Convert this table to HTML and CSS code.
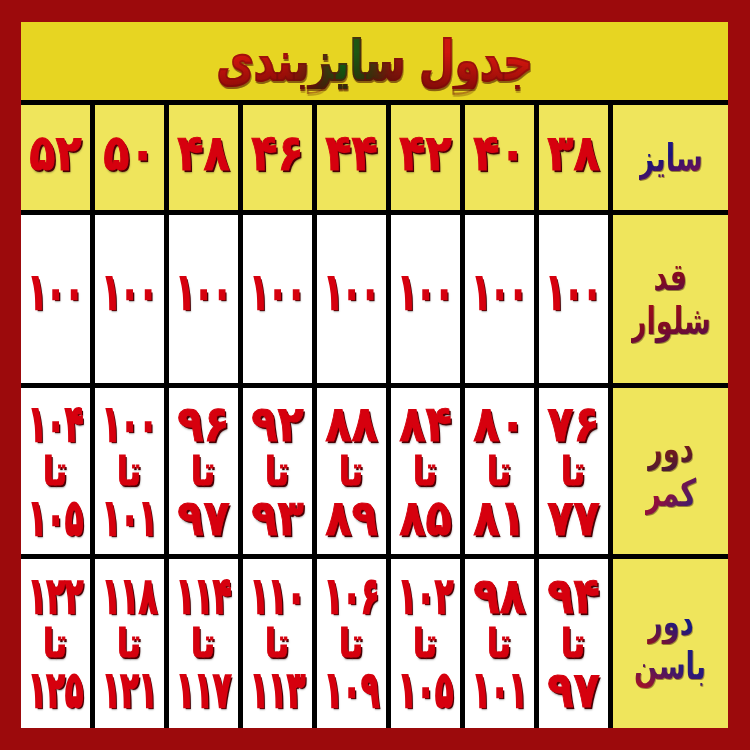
FILE: index.html
```html
<!DOCTYPE html>
<html lang="fa">
<head>
<meta charset="utf-8">
<link rel="stylesheet" href="styles.css">
</head>
<body>
<div class="frame">
  <div class="title"><h1 class="title-text">جدول سایزبندی</h1></div>
  <div class="table" dir="rtl">
    <div class="cell label"><span class="lbl lbl-size">سایز</span></div>
    <div class="cell head"><span class="num">۳۸</span></div>
    <div class="cell head"><span class="num">۴۰</span></div>
    <div class="cell head"><span class="num">۴۲</span></div>
    <div class="cell head"><span class="num">۴۴</span></div>
    <div class="cell head"><span class="num">۴۶</span></div>
    <div class="cell head"><span class="num">۴۸</span></div>
    <div class="cell head"><span class="num">۵۰</span></div>
    <div class="cell head"><span class="num">۵۲</span></div>

    <div class="cell label"><span class="lbl lbl-red">قد</span><span class="lbl lbl-red">شلوار</span></div>
    <div class="cell val single"><span class="num n3">۱۰۰</span></div>
    <div class="cell val single"><span class="num n3">۱۰۰</span></div>
    <div class="cell val single"><span class="num n3">۱۰۰</span></div>
    <div class="cell val single"><span class="num n3">۱۰۰</span></div>
    <div class="cell val single"><span class="num n3">۱۰۰</span></div>
    <div class="cell val single"><span class="num n3">۱۰۰</span></div>
    <div class="cell val single"><span class="num n3">۱۰۰</span></div>
    <div class="cell val single"><span class="num n3">۱۰۰</span></div>

    <div class="cell label"><span class="lbl lbl-brown">دور</span><span class="lbl lbl-mix">کمر</span></div>
    <div class="cell val"><span class="num">۷۶</span><span class="num ta">تا</span><span class="num">۷۷</span></div>
    <div class="cell val"><span class="num">۸۰</span><span class="num ta">تا</span><span class="num">۸۱</span></div>
    <div class="cell val"><span class="num">۸۴</span><span class="num ta">تا</span><span class="num">۸۵</span></div>
    <div class="cell val"><span class="num">۸۸</span><span class="num ta">تا</span><span class="num">۸۹</span></div>
    <div class="cell val"><span class="num">۹۲</span><span class="num ta">تا</span><span class="num">۹۳</span></div>
    <div class="cell val"><span class="num">۹۶</span><span class="num ta">تا</span><span class="num">۹۷</span></div>
    <div class="cell val"><span class="num n3">۱۰۰</span><span class="num ta">تا</span><span class="num n3">۱۰۱</span></div>
    <div class="cell val"><span class="num n3">۱۰۴</span><span class="num ta">تا</span><span class="num n3">۱۰۵</span></div>

    <div class="cell label"><span class="lbl lbl-blue">دور</span><span class="lbl lbl-blue2">باسن</span></div>
    <div class="cell val"><span class="num">۹۴</span><span class="num ta">تا</span><span class="num">۹۷</span></div>
    <div class="cell val"><span class="num">۹۸</span><span class="num ta">تا</span><span class="num n3">۱۰۱</span></div>
    <div class="cell val"><span class="num n3">۱۰۲</span><span class="num ta">تا</span><span class="num n3">۱۰۵</span></div>
    <div class="cell val"><span class="num n3">۱۰۶</span><span class="num ta">تا</span><span class="num n3">۱۰۹</span></div>
    <div class="cell val"><span class="num n3">۱۱۰</span><span class="num ta">تا</span><span class="num n3">۱۱۳</span></div>
    <div class="cell val"><span class="num n3">۱۱۴</span><span class="num ta">تا</span><span class="num n3">۱۱۷</span></div>
    <div class="cell val"><span class="num n3">۱۱۸</span><span class="num ta">تا</span><span class="num n3">۱۲۱</span></div>
    <div class="cell val"><span class="num n3">۱۲۲</span><span class="num ta">تا</span><span class="num n3">۱۲۵</span></div>
  </div>
</div>
</body>
</html>
```

FILE: styles.css
```css
html, body {
  margin: 0;
  padding: 0;
}
body {
  width: 750px;
  height: 750px;
  background: #9c0a0c;
  font-family: "DejaVu Sans", sans-serif;
  overflow: hidden;
}
.frame {
  padding: 22px 22px 22px 21px;
  display: flex;
  flex-direction: column;
}
.title {
  height: 78px;
  background: #e7d522;
  display: flex;
  align-items: center;
  justify-content: center;
}
.title-text {
  margin: 0;
  font-size: 55px;
  font-weight: bold;
  line-height: 1;
  direction: rtl;
  transform: scaleX(0.74);
  background-image:
    linear-gradient(180deg, rgba(0, 0, 0, 0) 35%, rgba(50, 0, 0, 0.45) 100%),
    linear-gradient(90deg, #e0180f 0%, #c0140c 22%, #5a3010 32%, #0c6a16 40%, #2a4a10 47%, #8a1a0e 55%, #c8160e 68%, #e0180f 100%);
  -webkit-background-clip: text;
  background-clip: text;
  color: transparent;
  -webkit-text-stroke: 2px rgba(110, 10, 10, 0.45);
  filter: drop-shadow(1px 2px 0 rgba(60, 0, 0, 0.55));
}
.table {
  display: grid;
  grid-template-columns: 115px repeat(8, 69px);
  grid-template-rows: 105px 168px 166px 169px;
  gap: 5px;
  background: #000;
  border-top: 5px solid #000;
}
.cell {
  display: flex;
  flex-direction: column;
  align-items: center;
  justify-content: center;
  overflow: hidden;
}
.head {
  background: #efe55c;
  padding-bottom: 8px;
  box-sizing: border-box;
}
.label {
  background: #efe55c;
}
.val {
  background: #fff;
}
.single {
  padding-bottom: 14px;
  box-sizing: border-box;
}
.num {
  display: block;
  font-weight: bold;
  font-size: 50px;
  line-height: 47px;
  color: #d6000e;
  -webkit-text-stroke: 1px #d6000e;
  text-shadow: 2px 2px 0 #4a0004, 2px 3px 2px rgba(0, 0, 0, 0.35);
  transform: scaleX(0.86);
  white-space: nowrap;
}
.n3 {
  transform: scaleX(0.6);
  -webkit-text-stroke: 2.5px #d6000e;
  text-shadow: 3px 2px 0 #4a0004, 3px 3px 2px rgba(0, 0, 0, 0.35);
}
.ta {
  font-size: 40px;
  transform: scaleX(0.82);
}
.lbl {
  display: block;
  font-weight: bold;
  font-size: 38px;
  line-height: 44px;
  transform: scaleX(0.72);
  -webkit-background-clip: text;
  background-clip: text;
  color: transparent;
  filter: drop-shadow(1px 1px 0 rgba(40, 0, 0, 0.45));
}
.lbl-size {
  background-image: linear-gradient(165deg, #2a1f9a 0%, #1a1278 45%, #5a1260 75%, #a01030 100%);
}
.lbl-red {
  background-image: linear-gradient(170deg, #a80c18 0%, #800a22 55%, #4a1058 100%);
}
.lbl-brown {
  background-image: linear-gradient(170deg, #8a1420 0%, #6a1a20 60%, #3a1a40 100%);
}
.lbl-mix {
  background-image: linear-gradient(135deg, #c0101a 0%, #8a1040 45%, #26207a 100%);
}
.lbl-blue {
  background-image: linear-gradient(200deg, #1a1a82 0%, #1a1a82 45%, #901020 100%);
}
.lbl-blue2 {
  background-image: linear-gradient(200deg, #1a1a82 0%, #2a1a7a 45%, #b0101c 100%);
}
```
